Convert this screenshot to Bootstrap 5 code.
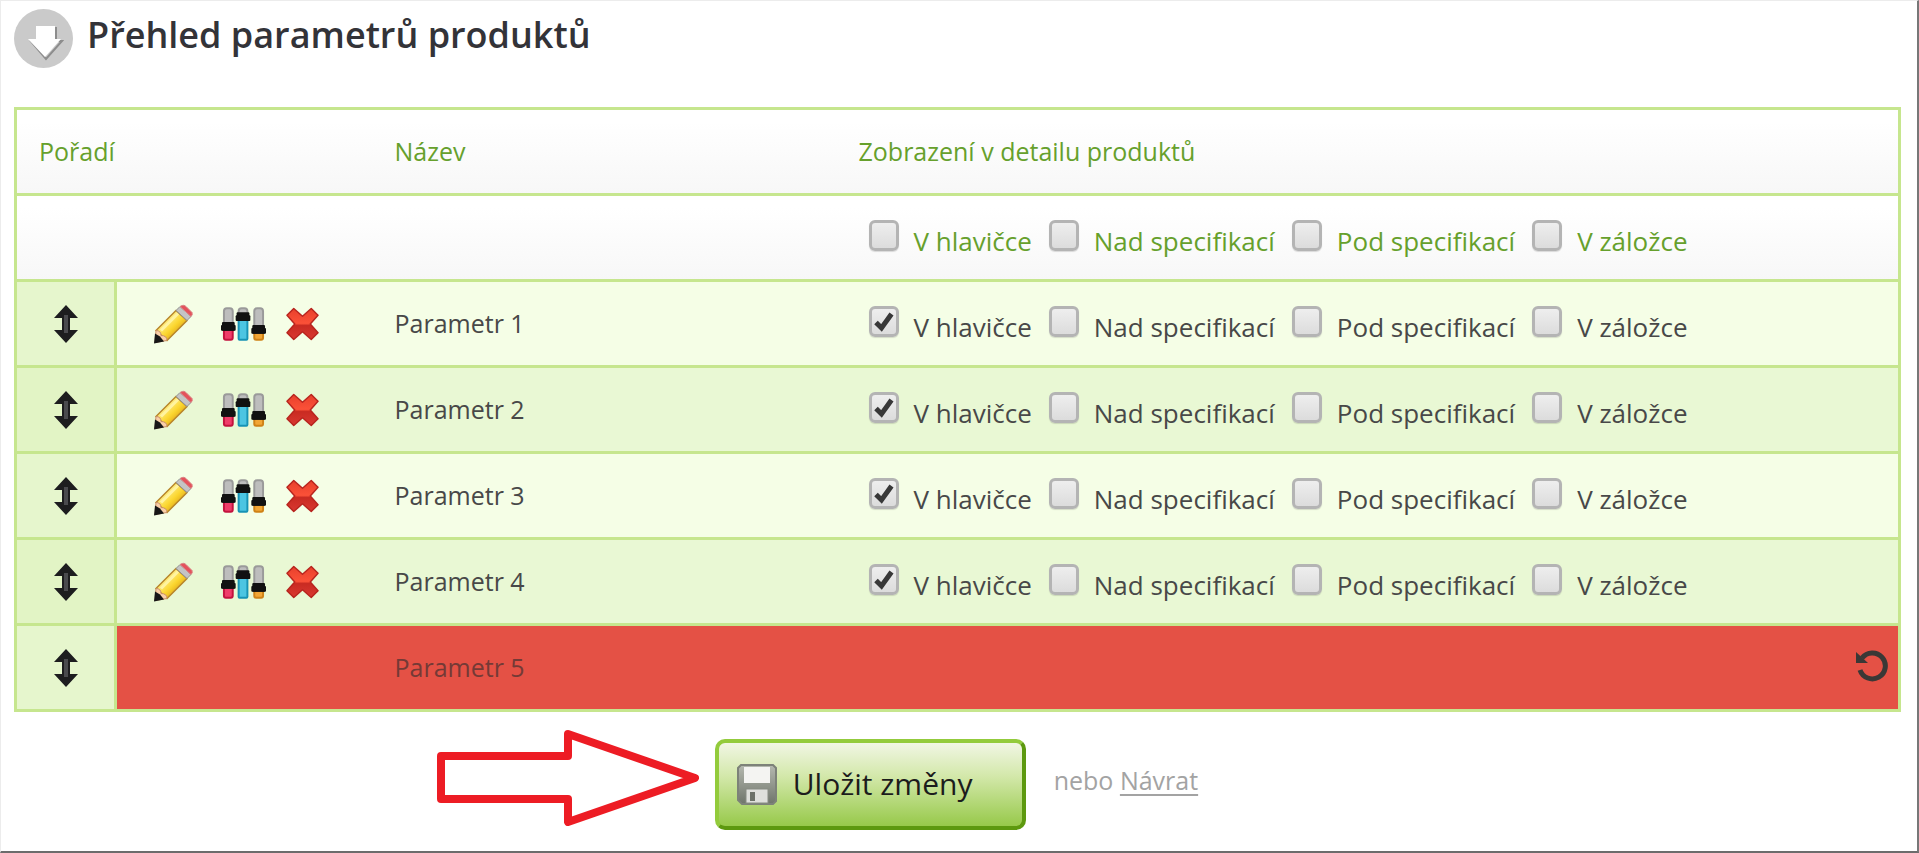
<!DOCTYPE html>
<html lang="cs">
<head>
<meta charset="utf-8">
<meta name="viewport" content="width=device-width, initial-scale=1">
<title>Přehled parametrů produktů</title>
<link href="https://cdn.jsdelivr.net/npm/bootstrap@5.3.0/dist/css/bootstrap.min.css" rel="stylesheet">
<style>
  :root { --line: #c6e68e; --leaf: #66a02c; }
  body { font-family: "Open Sans", "Noto Sans", sans-serif; font-size: 25px; line-height: 28px; color: #484848; background: #fff; }
  .page-frame { border: 1px solid #ececec; border-right: 2px solid #777; border-bottom: 2px solid #6c6c6c; padding: 8px 16px 0 13px; }
  .page-title { font-size: 36px; line-height: 52px; font-weight: 600; color: #333338; }
  .page-head { gap: 14px; margin-bottom: 39px; }
  .params { table-layout: fixed; border-collapse: collapse; border: 3px solid var(--line); }
  .params th, .params td { height: 86px; padding: 0 22px; vertical-align: middle; border-bottom: 3px solid var(--line); }
  .params thead tr { background: linear-gradient(#fff 15%, #f7f7f7); }
  .params th { font-weight: 400; color: var(--leaf); }
  .params thead tr:first-child th, .params tbody td:nth-child(3) { padding-bottom: 2px; }
  .params tbody tr { background: #f5fee6; }
  .params tbody tr:nth-child(even) { background: #e9f8d4; }
  .params tbody td:first-child { background: #e6f6cd; border-right: 3px solid var(--line); padding: 0; text-align: center; }
  .params tbody tr:nth-child(even) td:first-child { background: #e2f4c5; }
  .params tbody tr.removed { background: #e45145; color: #743a36; }
  .params tbody tr.removed td:last-child { padding: 0 10px 4px 22px; }
  .params .tools { padding-left: 37px; }
  .col-order { width: 100px; }
  .col-tools { width: 257px; }
  .col-name { width: 464px; }
  .plain-btn { background: none; border: 0; padding: 0; line-height: 0; display: inline-block; }
  .options { gap: 17px; padding-left: 10px; font-size: 26px; }
  .options label { display: inline-flex; align-items: baseline; gap: 15px; white-space: nowrap; }
  .tick { appearance: none; width: 30px; height: 31px; margin: 0 0 2px; flex: none; border: 3px solid #b4b4b4; border-radius: 6px; background: linear-gradient(#eee, #dcdcdc); box-shadow: 0 1px 1px #0002; }
  .tick:checked { background: url("data:image/svg+xml,%3Csvg xmlns='http://www.w3.org/2000/svg' viewBox='0 0 24 25'%3E%3Cpath d='M4 13.500 9.500 19 19.500 5' fill='none' stroke='%23383838' stroke-width='5'/%3E%3C/svg%3E") center/100% no-repeat, linear-gradient(#eee, #dcdcdc); }
  .form-foot { margin-left: 22.4%; padding-top: 18px; }
  .save-btn { display: flex; align-items: center; gap: 16px; width: 311px; height: 91px; padding: 0 18px; margin: 8px 28px 0 16px; font-size: 30px; color: #1c1c1c; border: 4px solid; border-color: #93cb3c #5d990f #5d990f #93cb3c; border-radius: 10px; background: linear-gradient(#f1f6e4, #d3e8aa 40%, #97c94a); }
  .back-note { color: #a3a3a3; }
  .back-note a { color: #a3a3a3; text-underline-offset: 4px; }
</style>
</head>
<body>
<svg width="0" height="0" class="position-absolute" aria-hidden="true">
  <defs>
    <linearGradient id="gPencil" x1="0" y1="0" x2="1" y2="1"><stop offset=".3" stop-color="#fff08a"/><stop offset=".55" stop-color="#fbd62f"/><stop offset=".8" stop-color="#d79b12"/></linearGradient>
    <linearGradient id="gCross" x1="0" y1="0" x2="0" y2="1"><stop offset="0" stop-color="#e8402c"/><stop offset=".48" stop-color="#fb5138"/><stop offset=".55" stop-color="#c92b22"/><stop offset="1" stop-color="#d93831"/></linearGradient>
    <linearGradient id="gDisk" x1="0" y1="0" x2="0" y2="1"><stop offset="0" stop-color="#b5b9b0"/><stop offset="1" stop-color="#6f756b"/></linearGradient>
    <symbol id="move" viewBox="0 0 24 38"><path d="M12 0 24 13H16V25H24L12 38 0 25H8V13H0Z" fill="#1d1d1f"/><path d="M10 10h4v18h-4z" fill="#4a4a4e"/></symbol>
    <symbol id="pencil" viewBox="0 0 39 39">
      <path d="M2 26 22 6 33 16 13 36Z" fill="url(#gPencil)" stroke="#b8862a" stroke-width="1.500"/>
      <path d="M7 26 24 9" stroke="#fff3a0" stroke-width="3"/>
      <path d="M22 6 26 2 37 12 33 16Z" fill="#c4c4c4" stroke="#8f8f8f"/>
      <path d="M26 2 28 1Q30 0 32 2L38 8Q39 10 37 12Z" fill="#e4525c" stroke="#d98686"/>
      <path d="M2 26Q7 26 7 31 13 31 13 36L1 38Z" fill="#f9cfa8" stroke="#c89067"/>
      <path d="M1 29 6 32 10 37 0 39Z" fill="#171717"/>
    </symbol>
    <symbol id="sliders" viewBox="0 0 46 34">
      <g fill="#bdbdbd" stroke="#9a9a9a" stroke-width="2"><rect x="3" y="1" width="9" height="20" rx="3"/><rect x="18" y="1" width="9" height="12" rx="3"/><rect x="34" y="1" width="9" height="22" rx="3"/></g>
      <rect x="3" y="22" width="9" height="11" rx="2" fill="#ef3c69" stroke="#c3133e" stroke-width="2"/>
      <rect x="18" y="11" width="9" height="22" rx="1" fill="#4cc5e2" stroke="#1793b5" stroke-width="2"/>
      <rect x="34" y="24" width="9" height="9" rx="2" fill="#f2a635" stroke="#cf8217" stroke-width="2"/>
      <g fill="#111"><rect x="0" y="18" width="15" height="6" rx="1"/><rect x="1" y="15" width="13" height="9" rx="1"/><rect x="15" y="8" width="15" height="6" rx="1"/><rect x="16" y="5" width="13" height="9" rx="1"/><rect x="31" y="21" width="15" height="6" rx="1"/><rect x="32" y="18" width="13" height="9" rx="1"/></g>
    </symbol>
    <symbol id="cross" viewBox="0 0 34 34"><path d="M8 1 17 9 26 1 33 8 25 17 33 26 26 33 17 25 8 33 1 26 9 17 1 8Z" fill="url(#gCross)" stroke="#b8251f" stroke-width="1.500" stroke-linejoin="round"/></symbol>
  </defs>
</svg>

<main class="page-frame min-vh-100">
  <header class="page-head d-flex align-items-start">
    <svg width="59" height="59" viewBox="0 0 59 59" aria-hidden="true"><circle cx="29.500" cy="29.500" r="29.500" fill="#cacaca"/><path d="M24 19H42V32H48L32 50 16 31" fill="none" stroke="#8d8d8d" stroke-width="2"/><path d="M22 17H41V30H47L31 48 14 30H22Z" fill="#fff"/></svg>
    <h1 class="page-title mb-0">Přehled parametrů produktů</h1>
  </header>

  <form>
    <table class="params w-100">
      <colgroup><col class="col-order"><col class="col-tools"><col class="col-name"><col></colgroup>
      <thead>
        <tr><th colspan="2" scope="col">Pořadí</th><th scope="col">Název</th><th scope="col">Zobrazení v detailu produktů</th></tr>
        <tr><th colspan="3"></th><th><div class="options d-flex">
          <label><input class="tick" type="checkbox">V hlavičce</label><label><input class="tick" type="checkbox">Nad specifikací</label><label><input class="tick" type="checkbox">Pod specifikací</label><label><input class="tick" type="checkbox">V záložce</label>
        </div></th></tr>
      </thead>
      <tbody>
        <tr>
          <td><button type="button" class="plain-btn" aria-label="Přesunout"><svg width="24" height="38"><use href="#move"/></svg></button></td>
          <td class="tools"><div class="d-flex align-items-center"><button type="button" class="plain-btn me-4" aria-label="Upravit"><svg width="39" height="40"><use href="#pencil"/></svg></button><button type="button" class="plain-btn me-3 ms-1" aria-label="Hodnoty"><svg width="45" height="34"><use href="#sliders"/></svg></button><button type="button" class="plain-btn ms-1" aria-label="Smazat"><svg width="33" height="34"><use href="#cross"/></svg></button></div></td>
          <td>Parametr 1</td>
          <td><div class="options d-flex"><label><input class="tick" type="checkbox" checked>V hlavičce</label><label><input class="tick" type="checkbox">Nad specifikací</label><label><input class="tick" type="checkbox">Pod specifikací</label><label><input class="tick" type="checkbox">V záložce</label></div></td>
        </tr>
        <tr>
          <td><button type="button" class="plain-btn" aria-label="Přesunout"><svg width="24" height="38"><use href="#move"/></svg></button></td>
          <td class="tools"><div class="d-flex align-items-center"><button type="button" class="plain-btn me-4" aria-label="Upravit"><svg width="39" height="40"><use href="#pencil"/></svg></button><button type="button" class="plain-btn me-3 ms-1" aria-label="Hodnoty"><svg width="45" height="34"><use href="#sliders"/></svg></button><button type="button" class="plain-btn ms-1" aria-label="Smazat"><svg width="33" height="34"><use href="#cross"/></svg></button></div></td>
          <td>Parametr 2</td>
          <td><div class="options d-flex"><label><input class="tick" type="checkbox" checked>V hlavičce</label><label><input class="tick" type="checkbox">Nad specifikací</label><label><input class="tick" type="checkbox">Pod specifikací</label><label><input class="tick" type="checkbox">V záložce</label></div></td>
        </tr>
        <tr>
          <td><button type="button" class="plain-btn" aria-label="Přesunout"><svg width="24" height="38"><use href="#move"/></svg></button></td>
          <td class="tools"><div class="d-flex align-items-center"><button type="button" class="plain-btn me-4" aria-label="Upravit"><svg width="39" height="40"><use href="#pencil"/></svg></button><button type="button" class="plain-btn me-3 ms-1" aria-label="Hodnoty"><svg width="45" height="34"><use href="#sliders"/></svg></button><button type="button" class="plain-btn ms-1" aria-label="Smazat"><svg width="33" height="34"><use href="#cross"/></svg></button></div></td>
          <td>Parametr 3</td>
          <td><div class="options d-flex"><label><input class="tick" type="checkbox" checked>V hlavičce</label><label><input class="tick" type="checkbox">Nad specifikací</label><label><input class="tick" type="checkbox">Pod specifikací</label><label><input class="tick" type="checkbox">V záložce</label></div></td>
        </tr>
        <tr>
          <td><button type="button" class="plain-btn" aria-label="Přesunout"><svg width="24" height="38"><use href="#move"/></svg></button></td>
          <td class="tools"><div class="d-flex align-items-center"><button type="button" class="plain-btn me-4" aria-label="Upravit"><svg width="39" height="40"><use href="#pencil"/></svg></button><button type="button" class="plain-btn me-3 ms-1" aria-label="Hodnoty"><svg width="45" height="34"><use href="#sliders"/></svg></button><button type="button" class="plain-btn ms-1" aria-label="Smazat"><svg width="33" height="34"><use href="#cross"/></svg></button></div></td>
          <td>Parametr 4</td>
          <td><div class="options d-flex"><label><input class="tick" type="checkbox" checked>V hlavičce</label><label><input class="tick" type="checkbox">Nad specifikací</label><label><input class="tick" type="checkbox">Pod specifikací</label><label><input class="tick" type="checkbox">V záložce</label></div></td>
        </tr>
        <tr class="removed">
          <td><button type="button" class="plain-btn" aria-label="Přesunout"><svg width="24" height="38"><use href="#move"/></svg></button></td>
          <td></td>
          <td>Parametr 5</td>
          <td class="text-end"><button type="button" class="plain-btn" aria-label="Obnovit"><svg width="32" height="32" viewBox="0 0 32 32"><path d="M6 8A13 13 0 1 1 4 20" fill="none" stroke="#3a3836" stroke-width="5"/><path d="M0 2V13H12Z" fill="#3a3836"/></svg></button></td>
        </tr>
      </tbody>
    </table>

    <div class="form-foot d-flex align-items-center">
      <svg class="flex-shrink-0 mb-1" width="262" height="96" viewBox="0 0 262 96" aria-hidden="true"><path d="M4 26H131V4L258 48 131 92V69H4Z" fill="#fff" stroke="#ed1c24" stroke-width="8" stroke-linejoin="round"/></svg>
      <button type="submit" class="save-btn flex-shrink-0">
        <svg width="40" height="41" viewBox="0 0 40 41" aria-hidden="true"><path d="M4 1H36L39 4V37L36 40H5L1 36V4Z" fill="url(#gDisk)" stroke="#7d8279" stroke-width="2"/><rect x="7" y="3" width="26" height="16" fill="#f4f4f2"/><rect x="9" y="25" width="22" height="14" fill="#dfe0dc" stroke="#878c83"/><rect x="13" y="28" width="5" height="9" fill="#6c7168"/></svg>
        <span>Uložit změny</span>
      </button>
      <span class="back-note text-nowrap">nebo <a href="#">Návrat</a></span>
    </div>
  </form>
</main>
<script src="https://cdn.jsdelivr.net/npm/bootstrap@5.3.0/dist/js/bootstrap.bundle.min.js"></script>
</body>
</html>
